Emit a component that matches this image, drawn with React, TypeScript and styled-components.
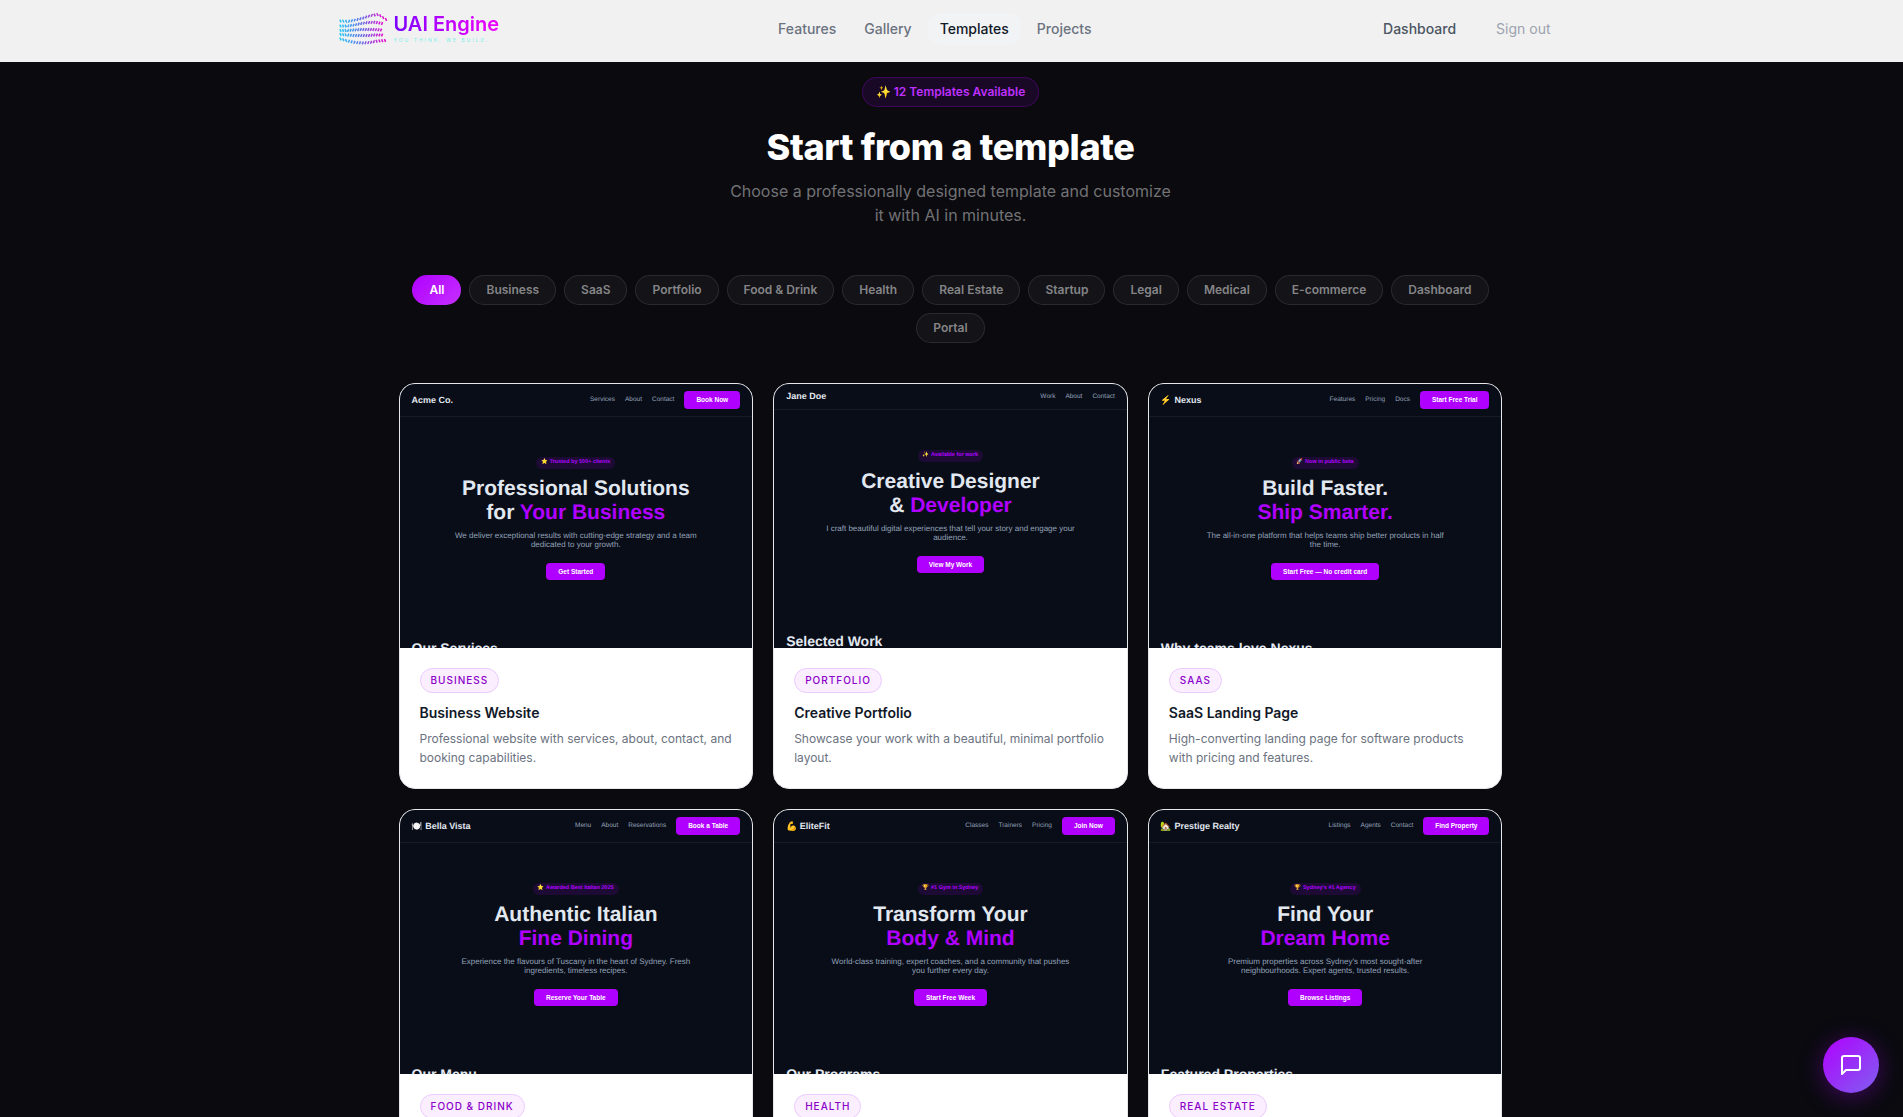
import React, { useState } from "react";
import styled, { createGlobalStyle } from "styled-components";

const accent = "#b000ff";
const sans = `Inter, "Noto Sans", sans-serif`;
const helvetica = `"Liberation Sans", Arial, sans-serif`;

const GlobalStyle = createGlobalStyle`
  *, *::before, *::after { box-sizing: border-box; }
  body {
    margin: 0;
    background: #0a0a0f;
    font-family: ${sans};
    -webkit-font-smoothing: antialiased;
  }
  h1, h2, h3, p { margin: 0; }
  a { text-decoration: none; color: inherit; }
  button { font: inherit; border: 0; cursor: pointer; }
`;

/* ---------- header ---------- */

const Header = styled.header`
  background: #f1f1f1;
  height: 62px;
  padding-bottom: 4px;
`;

const HeaderInner = styled.div`
  max-width: 1278px;
  height: 100%;
  margin: 0 auto;
  padding: 0 24px;
  display: flex;
  align-items: center;
  justify-content: space-between;
`;

const Brand = styled.a`
  display: flex;
  align-items: center;
  gap: 5px;
  width: 166px;
`;

const BrandText = styled.span`
  display: flex;
  flex-direction: column;
`;

const BrandName = styled.span`
  font-size: 20px;
  line-height: 22px;
  font-weight: 600;
  white-space: nowrap;
  color: transparent;
  background: linear-gradient(90deg, #7a00ff, #c800ff 60%, #f000ff);
  background-clip: text;
  -webkit-background-clip: text;
`;

const Tagline = styled.span`
  font-size: 5px;
  line-height: 10px;
  letter-spacing: 2px;
  color: #7df0ea;
  white-space: nowrap;
`;

const Nav = styled.nav`
  display: flex;
  gap: 4px;
`;

const NavLink = styled.a<{ $active?: boolean }>`
  padding: 6px 12px;
  border-radius: 12px;
  font-size: 14px;
  line-height: 20px;
  font-weight: 500;
  color: ${(p) => (p.$active ? "#111827" : "#6b7280")};
  background: ${(p) => (p.$active ? "#f2f3f5" : "transparent")};
`;

const Account = styled.div`
  display: flex;
  gap: 8px;
`;

const AccountLink = styled.a`
  padding: 6px 16px;
  font-size: 14px;
  line-height: 20px;
  font-weight: 500;
  color: #4b5563;
`;

const SignOut = styled.button`
  padding: 6px 16px;
  background: none;
  font-size: 14px;
  line-height: 20px;
  color: #9ca3af;
`;

/* ---------- intro ---------- */

const Main = styled.main`
  max-width: 1154px;
  margin: 0 auto;
  padding: 15px 26px 24px 24px;
`;

const Intro = styled.section`
  display: flex;
  flex-direction: column;
  align-items: center;
  text-align: center;
`;

const CountBadge = styled.span`
  padding: 6px 13px;
  border: 1px solid rgba(176, 0, 255, 0.25);
  border-radius: 15px;
  background: rgba(176, 0, 255, 0.1);
  color: #bf30ff;
  font-size: 12px;
  line-height: 16px;
  font-weight: 600;
`;

const Title = styled.h1`
  margin-top: 20px;
  color: #fff;
  font-size: 36px;
  line-height: 40px;
  font-weight: 800;
  letter-spacing: -0.01em;
`;

const Lead = styled.p`
  margin-top: 12px;
  max-width: 450px;
  color: #727275;
  font-size: 16px;
  line-height: 24px;
`;

const Filters = styled.div`
  margin: 48px 0 40px;
  display: flex;
  flex-wrap: wrap;
  justify-content: center;
  gap: 8px;
`;

const Chip = styled.button<{ $active: boolean }>`
  padding: 6px 16px;
  border: 1px solid ${(p) => (p.$active ? "transparent" : "rgba(255,255,255,0.1)")};
  border-radius: 15px;
  font-size: 12px;
  line-height: 16px;
  font-weight: 600;
  color: ${(p) => (p.$active ? "#fff" : "#858587")};
  background: ${(p) =>
    p.$active
      ? "linear-gradient(135deg, #b000ff, #c530ff) border-box"
      : "rgba(255,255,255,0.04)"};
`;

/* ---------- cards ---------- */

const Grid = styled.div`
  display: grid;
  grid-template-columns: repeat(3, 1fr);
  gap: 20px;
`;

const Card = styled.article`
  background: #fff;
  border: 1px solid #e5e7eb;
  border-radius: 16px;
  overflow: hidden;
`;

const CardBody = styled.div`
  padding: 20px 20px 21px;
  display: flex;
  flex-direction: column;
  align-items: flex-start;
`;

const Tag = styled.span`
  padding: 4px 10px;
  border: 1px solid #eccbfd;
  border-radius: 13px;
  background: #faeeff;
  color: #8a00c8;
  font-size: 10px;
  line-height: 15px;
  font-weight: 500;
  letter-spacing: 1px;
  text-transform: uppercase;
`;

const CardTitle = styled.h2`
  margin-top: 10px;
  color: #111827;
  font-size: 14px;
  line-height: 20px;
  font-weight: 600;
`;

const CardText = styled.p`
  margin-top: 6px;
  color: #6b7280;
  font-size: 12px;
  line-height: 19px;
`;

/* ---------- half-size page thumbnail ---------- */

const Frame = styled.div`
  height: 264px;
  overflow: hidden;
  background: #090d18;
`;

const MiniPage = styled.div`
  zoom: 0.5;
  font-family: ${helvetica};
  color: #e2e8f0;
  text-rendering: geometricPrecision;
`;

const MiniNav = styled.div`
  display: flex;
  align-items: center;
  justify-content: space-between;
  padding: 14px 24px;
  border-bottom: 1px solid #161b28;
`;

const MiniBrand = styled.span`
  font-size: 18px;
  line-height: 21px;
  font-weight: 700;
`;

const MiniLinks = styled.div`
  display: flex;
  align-items: center;
  gap: 20px;
`;

const MiniLink = styled.a`
  font-size: 13px;
  line-height: 15px;
  color: #94a3b8;
`;

const MiniButton = styled.button`
  padding: 10px 24px;
  border-radius: 8px;
  background: ${accent};
  color: #fff;
  font-size: 13px;
  line-height: 15px;
  font-weight: 700;
`;

const MiniHero = styled.div`
  display: flex;
  flex-direction: column;
  align-items: center;
  padding: 80px 24px;
  text-align: center;
`;

const MiniBadge = styled.span`
  padding: 5px 10px;
  border-radius: 12px;
  background: rgba(176, 0, 255, 0.13);
  color: ${accent};
  font-size: 11px;
  line-height: 14px;
  font-weight: 700;
`;

const MiniHeading = styled.h3`
  margin-top: 16px;
  font-size: 42px;
  line-height: 48px;
  font-weight: 700;
`;

const Highlight = styled.span`
  color: ${accent};
`;

const MiniText = styled.p`
  margin: 12px 0 28px;
  max-width: 500px;
  color: #94a3b8;
  font-size: 16px;
  line-height: 18px;
`;

const MiniSection = styled.h3`
  padding: 40px 24px;
  font-size: 28px;
  line-height: 32px;
  font-weight: 700;
`;

/* ---------- chat ---------- */

const ChatButton = styled.button`
  position: fixed;
  right: 24px;
  bottom: 24px;
  width: 56px;
  height: 56px;
  padding: 0;
  border-radius: 50%;
  display: grid;
  place-items: center;
  color: #fff;
  background: linear-gradient(135deg, #b000ff, #8060f0);
  box-shadow: 0 4px 24px rgba(176, 0, 255, 0.35);
`;

type Template = {
  tag: string;
  title?: string;
  text?: string;
  brand: string;
  links: string[];
  cta?: string;
  badge: string;
  line1: string;
  line2?: string;
  highlight: string;
  copy: string;
  action: string;
  section: string;
};

const templates: Template[] = [
  {
    tag: "Business",
    title: "Business Website",
    text: "Professional website with services, about, contact, and booking capabilities.",
    brand: "Acme Co.",
    links: ["Services", "About", "Contact"],
    cta: "Book Now",
    badge: "⭐ Trusted by 500+ clients",
    line1: "Professional Solutions",
    line2: "for ",
    highlight: "Your Business",
    copy: "We deliver exceptional results with cutting-edge strategy and a team dedicated to your growth.",
    action: "Get Started",
    section: "Our Services",
  },
  {
    tag: "Portfolio",
    title: "Creative Portfolio",
    text: "Showcase your work with a beautiful, minimal portfolio layout.",
    brand: "Jane Doe",
    links: ["Work", "About", "Contact"],
    badge: "✨ Available for work",
    line1: "Creative Designer",
    line2: "& ",
    highlight: "Developer",
    copy: "I craft beautiful digital experiences that tell your story and engage your audience.",
    action: "View My Work",
    section: "Selected Work",
  },
  {
    tag: "SaaS",
    title: "SaaS Landing Page",
    text: "High-converting landing page for software products with pricing and features.",
    brand: "⚡ Nexus",
    links: ["Features", "Pricing", "Docs"],
    cta: "Start Free Trial",
    badge: "🚀 Now in public beta",
    line1: "Build Faster.",
    highlight: "Ship Smarter.",
    copy: "The all-in-one platform that helps teams ship better products in half the time.",
    action: "Start Free — No credit card",
    section: "Why teams love Nexus",
  },
  {
    tag: "Food & Drink",
    brand: "🍽️ Bella Vista",
    links: ["Menu", "About", "Reservations"],
    cta: "Book a Table",
    badge: "⭐ Awarded Best Italian 2025",
    line1: "Authentic Italian",
    highlight: "Fine Dining",
    copy: "Experience the flavours of Tuscany in the heart of Sydney. Fresh ingredients, timeless recipes.",
    action: "Reserve Your Table",
    section: "Our Menu",
  },
  {
    tag: "Health",
    brand: "💪 EliteFit",
    links: ["Classes", "Trainers", "Pricing"],
    cta: "Join Now",
    badge: "🏆 #1 Gym in Sydney",
    line1: "Transform Your",
    highlight: "Body & Mind",
    copy: "World-class training, expert coaches, and a community that pushes you further every day.",
    action: "Start Free Week",
    section: "Our Programs",
  },
  {
    tag: "Real Estate",
    brand: "🏡 Prestige Realty",
    links: ["Listings", "Agents", "Contact"],
    cta: "Find Property",
    badge: "🏆 Sydney's #1 Agency",
    line1: "Find Your",
    highlight: "Dream Home",
    copy: "Premium properties across Sydney's most sought-after neighbourhoods. Expert agents, trusted results.",
    action: "Browse Listings",
    section: "Featured Properties",
  },
];

const categories = [
  "All", "Business", "SaaS", "Portfolio", "Food & Drink", "Health", "Real Estate",
  "Startup", "Legal", "Medical", "E-commerce", "Dashboard", "Portal",
];

/* Each row of the wave: heights at evenly spaced stops, and where the row ends. */
const waveRows = [
  { end: 49, ys: [8, 8.4, 7, 5, 2.5, 1.5, 6.5] },
  { end: 45, ys: [13, 13, 12, 10.5, 9.5, 9.2, 10.5] },
  { end: 44, ys: [17.5, 17.5, 17, 16.5, 16.5, 16.5, 17] },
  { end: 45, ys: [21.5, 22, 22.5, 22.5, 22.5, 22, 22] },
  { end: 48, ys: [26, 28, 29.5, 30, 29.5, 28, 27.5] },
];

function Wave() {
  const ticks: React.ReactNode[] = [];
  waveRows.forEach(({ end, ys }, r) => {
    const n = 17;
    for (let i = 0; i < n; i++) {
      const t = i / (n - 1);
      const s = t * (ys.length - 1);
      const k = Math.min(Math.floor(s), ys.length - 2);
      const y = ys[k] + (ys[k + 1] - ys[k]) * (s - k);
      const x = 3.5 + t * (end - 3.5);
      const lean = i < 3 || (r === 0 && t > 0.7) || (r === 4 && t > 0.8) ? 0.6 : -0.6;
      ticks.push(
        <line key={`${r}-${i}`} x1={x - lean} y1={y - 1.4} x2={x + lean} y2={y + 1.4} />
      );
    }
  });
  return (
    <svg width="52" height="32" viewBox="0 0 52 32" aria-hidden="true">
      <defs>
        <linearGradient id="wave" x1="0" y1="0" x2="50" y2="0" gradientUnits="userSpaceOnUse">
          <stop offset="0" stopColor="#20d8f8" />
          <stop offset="0.45" stopColor="#5a78e8" />
          <stop offset="0.75" stopColor="#b030d8" />
          <stop offset="1" stopColor="#f000d0" />
        </linearGradient>
      </defs>
      <g stroke="url(#wave)" strokeWidth="1.5">{ticks}</g>
    </svg>
  );
}

function Preview({ t }: { t: Template }) {
  return (
    <Frame>
      <MiniPage>
        <MiniNav>
          <MiniBrand>{t.brand}</MiniBrand>
          <MiniLinks>
            {t.links.map((l) => (
              <MiniLink key={l} href="#">{l}</MiniLink>
            ))}
            {t.cta && <MiniButton type="button">{t.cta}</MiniButton>}
          </MiniLinks>
        </MiniNav>
        <MiniHero>
          <MiniBadge>{t.badge}</MiniBadge>
          <MiniHeading>
            {t.line1}
            <br />
            {t.line2}
            <Highlight>{t.highlight}</Highlight>
          </MiniHeading>
          <MiniText>{t.copy}</MiniText>
          <MiniButton type="button">{t.action}</MiniButton>
        </MiniHero>
        <MiniSection>{t.section}</MiniSection>
      </MiniPage>
    </Frame>
  );
}

export default function App() {
  const [category, setCategory] = useState("All");
  const shown = templates.filter((t) => category === "All" || t.tag === category);

  return (
    <>
      <GlobalStyle />
      <Header>
        <HeaderInner>
          <Brand href="#">
            <Wave />
            <BrandText>
              <BrandName>UAI Engine</BrandName>
              <Tagline>YOU THINK. WE BUILD.</Tagline>
            </BrandText>
          </Brand>
          <Nav>
            <NavLink href="#">Features</NavLink>
            <NavLink href="#">Gallery</NavLink>
            <NavLink href="#" $active aria-current="page">Templates</NavLink>
            <NavLink href="#">Projects</NavLink>
          </Nav>
          <Account>
            <AccountLink href="#">Dashboard</AccountLink>
            <SignOut type="button">Sign out</SignOut>
          </Account>
        </HeaderInner>
      </Header>
      <Main>
        <Intro>
          <CountBadge>✨ 12 Templates Available</CountBadge>
          <Title>Start from a template</Title>
          <Lead>Choose a professionally designed template and customize it with AI in minutes.</Lead>
        </Intro>
        <Filters>
          {categories.map((c) => (
            <Chip key={c} type="button" $active={c === category} onClick={() => setCategory(c)}>
              {c}
            </Chip>
          ))}
        </Filters>
        <Grid>
          {shown.map((t) => (
            <Card key={t.tag}>
              <Preview t={t} />
              <CardBody>
                <Tag>{t.tag}</Tag>
                {t.title && <CardTitle>{t.title}</CardTitle>}
                {t.text && <CardText>{t.text}</CardText>}
              </CardBody>
            </Card>
          ))}
        </Grid>
      </Main>
      <ChatButton type="button" aria-label="Open chat">
        <svg width="24" height="24" viewBox="0 0 24 24" fill="none" stroke="currentColor"
          strokeWidth="2" strokeLinecap="round" strokeLinejoin="round" aria-hidden="true">
          <path d="M21 15a2 2 0 0 1-2 2H7l-4 4V5a2 2 0 0 1 2-2h14a2 2 0 0 1 2 2z" />
        </svg>
      </ChatButton>
    </>
  );
}
